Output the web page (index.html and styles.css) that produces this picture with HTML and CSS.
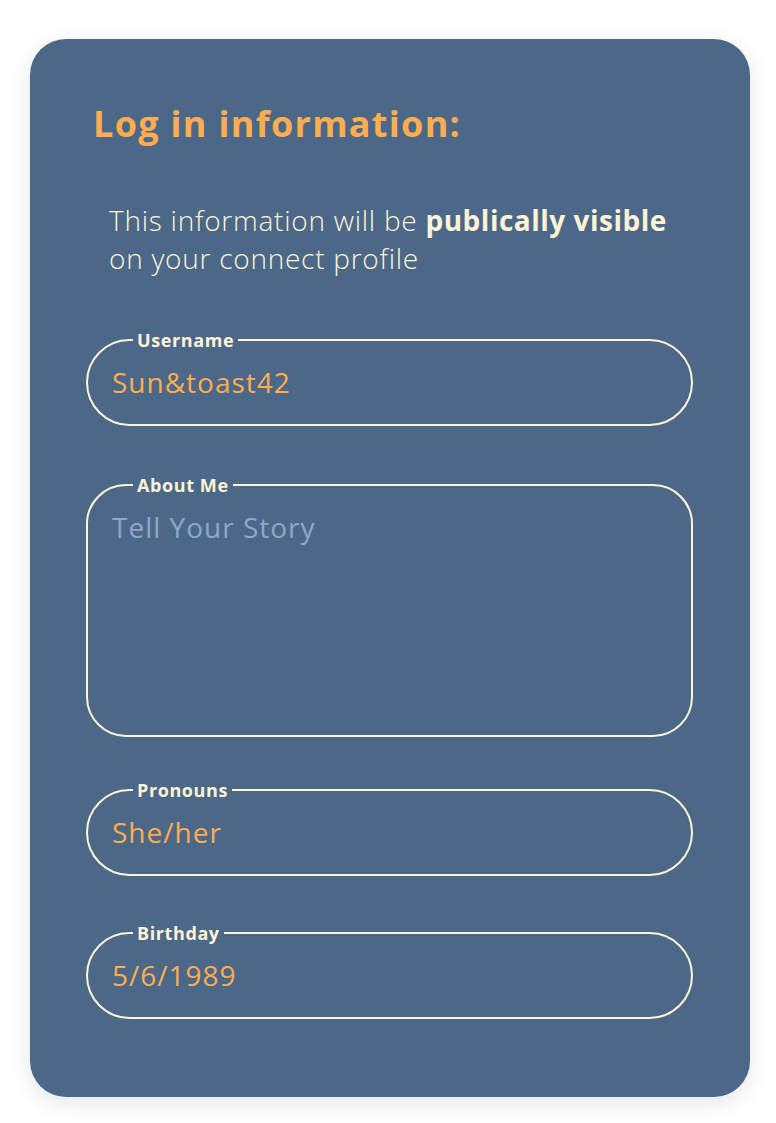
FILE: index.html
```html
<!DOCTYPE html>
<html lang="en">
<head>
<meta charset="utf-8">
<title>Log in information</title>
<link rel="stylesheet" href="styles.css">
</head>
<body>
<main class="card">
  <h1 class="title">Log in information:</h1>
  <p class="intro">This information will be <strong>publically visible</strong><br>on your connect profile</p>
  <form class="fields">
    <fieldset class="field field-user">
      <legend>Username</legend>
      <div class="value">Sun&amp;toast42</div>
    </fieldset>
    <fieldset class="field field-about">
      <legend>About Me</legend>
      <div class="value placeholder">Tell Your Story</div>
    </fieldset>
    <fieldset class="field field-pron">
      <legend>Pronouns</legend>
      <div class="value">She/her</div>
    </fieldset>
    <fieldset class="field field-birth">
      <legend>Birthday</legend>
      <div class="value">5/6/1989</div>
    </fieldset>
  </form>
</main>
</body>
</html>
```
FILE: styles.css
```css
* { box-sizing: border-box; }
html, body { margin: 0; padding: 0; background: #ffffff; }
body {
  font-family: "Open Sans", "Lato", sans-serif;
  padding: 39px 26px 26px 30px;
}
.card {
  width: 720px;
  height: 1058px;
  background: #4b6889;
  border-radius: 36px;
  box-shadow: 0 6px 22px rgba(0, 0, 0, 0.10);
  padding: 63px 57px 0 56px;
}
.title {
  margin: 0 0 0 7px;
  font-size: 36px;
  font-weight: 700;
  line-height: 44px;
  letter-spacing: 1.3px;
  color: #ffad4f;
}
.intro {
  margin: 55px 0 0 23px;
  font-size: 28px;
  font-weight: 300;
  line-height: 38px;
  letter-spacing: 0.75px;
  color: #fff3d6;
}
.intro strong { font-weight: 700; letter-spacing: 0.5px; }
.fields {
  margin-top: 53px;
  display: flex;
  flex-direction: column;
}
.field {
  margin: 0;
  border: 2px solid #fff3d6;
  border-radius: 44px;
  padding: 0 24px;
  height: 96px;
  min-width: 0;
}
.field legend {
  margin-left: 21px;
  padding: 0 4px;
  font-size: 18px;
  font-weight: 700;
  line-height: 20px;
  letter-spacing: 0.6px;
  color: #fff3d6;
}
.field-about {
  margin-top: 49px;
  height: 262px;
  border-radius: 40px;
}
.field-pron { margin-top: 43px; }
.field-birth { margin-top: 47px; }
.value {
  margin-top: 13px;
  font-size: 28px;
  line-height: 38px;
  letter-spacing: 1px;
  color: #ffad4f;
}
.placeholder { color: #8fa7c6; }
```
